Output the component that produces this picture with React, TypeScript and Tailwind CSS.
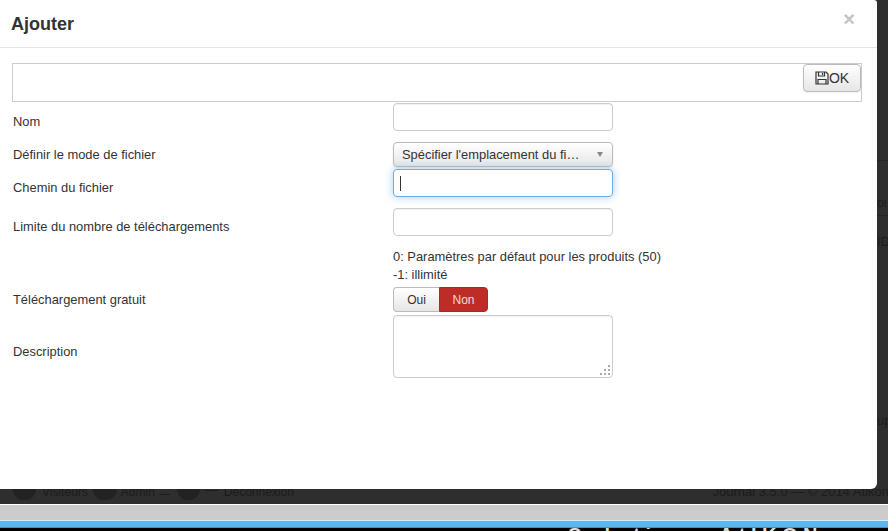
import React from "react";

function Row({ label, h, labelOffset = 0, children, mt = 0 }: { label: string; h: string; labelOffset?: number; children: React.ReactNode; mt?: number }) {
  return (
    <div className={`grid grid-cols-[380px_220px] items-center ${h}`} style={{ marginTop: mt }}>
      <label className="whitespace-nowrap text-[12.9px] leading-[18px] text-[#333]" style={{ transform: `translateY(${labelOffset}px)` }}>{label}</label>
      {children}
    </div>
  );
}

const inputCls = "block h-[28px] w-[220px] rounded-[4px] border border-[#ccc] bg-white shadow-[inset_0_1px_1px_rgba(0,0,0,0.06)] outline-none";

export default function App() {
  return (
    <div className="relative flex h-[531px] w-[888px] flex-col overflow-hidden bg-[#2b2b2b] font-['Liberation_Sans',Arial,sans-serif]">
      {/* page behind the modal */}
      <div className="flex h-[504px] flex-col justify-end overflow-hidden bg-[#2e2e2e]">
        <div className="flex h-[15px] items-start justify-between whitespace-nowrap text-[12px] leading-[6px] text-[#1c1c1c]">
          <div className="flex items-start pl-[13px]">
            <span className="h-[11px] w-[23px] rounded-b-full bg-[#222]" />
            <span className="ml-[6px]">Visiteurs</span>
            <span className="ml-[5px] h-[11px] w-[24px] rounded-b-full bg-[#222]" />
            <span className="ml-[4px]">Admin</span>
            <span className="ml-[5px] mt-[5px] h-[1px] w-[10px] bg-[#1c1c1c]" />
            <span className="ml-[7px] h-[11px] w-[23px] rounded-b-full bg-[#222]" />
            <span className="ml-[5px] mt-[1px] h-[1px] w-[13px] bg-[#1c1c1c]" />
            <span className="ml-[6px]">Déconnexion</span>
          </div>
          <span className="-mr-[1px] text-[13px]">Journal 3.5.0 — © 2014 Atikon</span>
        </div>
      </div>
      <div className="h-px bg-white" />
      <div className="h-[15px] bg-[#cccccc]" />
      <div className="h-px bg-[#cfeefa]" />
      <div className="h-[6px] bg-[#5eb6ec]" />
      <div className="h-px bg-[#4a8fc0]" />
      <div className="flex-1 overflow-hidden bg-black pl-[568px] text-[20px] font-bold leading-[20px] tracking-[5.5px] text-[#ddd]">
        <span className="block -translate-y-[3px] whitespace-nowrap">Solutions AtIKON</span>
      </div>

      {/* behind-modal hints on right edge */}
      <div className="absolute left-[877px] top-[130px] h-[320px] w-[11px] overflow-hidden">
        <div className="absolute top-[30px] h-px w-full bg-[#262626]" />
        <div className="absolute top-[66px] text-[12px] leading-[14px] text-[#1d1d1d]">oi</div>
        <div className="absolute top-[85px] h-px w-full bg-[#262626]" />
        <div className="absolute top-[105px] text-[13px] leading-[14px] text-[#1d1d1d]">ID</div>
        <div className="absolute top-[284px] text-[13px] leading-[14px] text-[#1d1d1d]">up</div>
      </div>

      {/* modal */}
      <div className="absolute left-0 top-0 h-[489px] w-[877px] rounded-br-[6px] rounded-tr-[3px] bg-white">
        <div className="relative flex h-[48px] items-center border-b border-[#e5e5e5] pl-[11px]">
          <h3 className="text-[18px] font-bold leading-[24px] text-[#333]">Ajouter</h3>
          <span className="absolute right-[22px] top-[9px] text-[20px] font-bold leading-[20px] text-[#c4c4c4]">×</span>
        </div>
        <div className="pl-[13px] pt-[15px]">
          <div className="relative -ml-px h-[39px] w-[850px] border border-[#ccc]">
            <button className="absolute right-0 top-0 flex h-[28px] w-[58px] items-center justify-center rounded-[4px] border border-[#bbb] bg-gradient-to-b from-white to-[#e6e6e6] text-[14px] leading-none text-[#333] shadow-[0_1px_2px_rgba(0,0,0,0.05)]">
              <svg width="14" height="14" viewBox="0 0 14 14" fill="none" stroke="#333" strokeWidth="1.2">
                <path d="M1 1h10l2 2v10H1z" />
                <path d="M3.5 1v4h6V1" />
                <path d="M3 13V8.5h8V13" />
                <path d="M7.5 2v2" />
              </svg>
              <span>OK</span>
            </button>
          </div>

          <Row label="Nom" h="h-[28px]" mt={1} labelOffset={5}>
            <input className={inputCls} />
          </Row>
          <Row label="Définir le mode de fichier" h="h-[25px]" mt={11} labelOffset={0}>
            <div className="flex h-[25px] w-[220px] items-center justify-between rounded-[4px] border border-[#bbb] bg-gradient-to-b from-white to-[#e6e6e6] pl-[8px] pr-[9px] text-[#333] shadow-[0_1px_2px_rgba(0,0,0,0.1)]">
              <span className="text-[12.9px] leading-[18px]">Spécifier l'emplacement du fi…</span>
              <span className="h-0 w-0 border-x-[3.5px] border-t-[5px] border-x-transparent border-t-[#888]" />
            </div>
          </Row>
          <Row label="Chemin du fichier" h="h-[28px]" mt={2} labelOffset={5}>
            <div className="flex h-[28px] w-[220px] items-center rounded-[4px] border border-[#66afe9] bg-white pl-[6px] shadow-[0_0_8px_rgba(102,175,233,0.6)]">
              <span className="h-[15px] w-px bg-[#333]" />
            </div>
          </Row>
          <Row label="Limite du nombre de téléchargements" h="h-[28px]" mt={11} labelOffset={5}>
            <input className={inputCls} />
          </Row>
          <div className="mt-[12px] pl-[380px] text-[12.9px] leading-[18px] text-[#333]">
            <div>0: Paramètres par défaut pour les produits (50)</div>
            <div>-1: illimité</div>
          </div>
          <Row label="Téléchargement gratuit" h="h-[25px]" mt={3}>
            <div className="flex h-[25px] text-[12px]">
              <div className="flex w-[46px] items-center justify-center rounded-l-[4px] border border-r-0 border-[#bbb] bg-gradient-to-b from-white to-[#e6e6e6] text-[#333]">Oui</div>
              <div className="flex w-[49px] items-center justify-center rounded-r-[4px] border border-[#a82a24] bg-[#bd2c26] text-[#f5dcdc]">Non</div>
            </div>
          </Row>
          <Row label="Description" h="h-[63px]" mt={3} labelOffset={5}>
            <div className="relative h-[63px] w-[220px] rounded-[4px] border border-[#ccc] bg-white shadow-[inset_0_1px_1px_rgba(0,0,0,0.06)]">
              <svg className="absolute bottom-[1px] right-[1px]" width="12" height="12" viewBox="0 0 12 12" fill="#aaa">
                <rect x="9" y="1" width="2" height="2" />
                <rect x="5" y="5" width="2" height="2" />
                <rect x="9" y="5" width="2" height="2" />
                <rect x="1" y="9" width="2" height="2" />
                <rect x="5" y="9" width="2" height="2" />
                <rect x="9" y="9" width="2" height="2" />
              </svg>
            </div>
          </Row>
        </div>
      </div>
    </div>
  );
}
